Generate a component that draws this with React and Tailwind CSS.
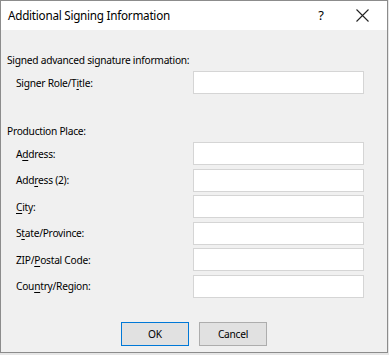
import React from "react";

const fields = [
  { pre: "A", u: "d", post: "dress:" },
  { pre: "Add", u: "r", post: "ess (2):" },
  { pre: "", u: "C", post: "ity:" },
  { pre: "S", u: "t", post: "ate/Province:" },
  { pre: "ZIP/", u: "P", post: "ostal Code:" },
  { pre: "Cou", u: "n", post: "try/Region:" },
];

const Label = ({ pre, u, post }) => (
  <span>
    {pre}
    <span className="underline underline-offset-2">{u}</span>
    {post}
  </span>
);

const Row = ({ children }) => (
  <div className="flex items-center h-[23px]">
    <div className="w-[186px] pl-[9px]">{children}</div>
    <input className="w-[171px] h-[23px] bg-white border border-[#d5d5d5] outline-none" />
  </div>
);

export default function App() {
  return (
    <div className="w-[389px] h-[355px] bg-[#e6e6e6] font-['Noto_Sans',sans-serif] text-black">
      <div className="w-[388px] h-[353px] border border-[#8c8c8c] bg-[#f0f0f0] flex flex-col">
        {/* title bar */}
        <div className="h-[29px] bg-white flex items-center pl-[7px]">
          <span className="text-[11.7px] tracking-[-0.25px]">Additional Signing Information</span>
          <span className="ml-auto text-[13px] w-[20px] text-center mr-[25px]">?</span>
          <svg width="13" height="13" viewBox="0 0 13 13" className="mr-[18px]">
            <path d="M0.5 0.5L12.5 12.5M12.5 0.5L0.5 12.5" stroke="#222" strokeWidth="1.1" />
          </svg>
        </div>

        <div className="flex flex-col text-[10.2px] tracking-[-0.25px] leading-[16px] pl-[6px] pt-[22px]">
          <div>Signed advanced signature information:</div>
          <div className="mt-[3px]">
            <Row>
              <span>
                Signer Role/T<span className="underline underline-offset-2">i</span>tle:
              </span>
            </Row>
          </div>

          <div className="mt-[29px]">Production Place:</div>
          <div className="mt-[3px] flex flex-col gap-[3.6px]">
            {fields.map((f, i) => (
              <Row key={i}>
                <Label {...f} />
              </Row>
            ))}
          </div>

          <div className="flex gap-[10px] mt-[24px] pl-[114px]">
            <button className="w-[68px] h-[24px] bg-[#e1e1e1] border border-[#0078d7]">
              OK
            </button>
            <button className="w-[68px] h-[24px] bg-[#e1e1e1] border border-[#adadad]">
              Cancel
            </button>
          </div>
        </div>
      </div>
    </div>
  );
}
